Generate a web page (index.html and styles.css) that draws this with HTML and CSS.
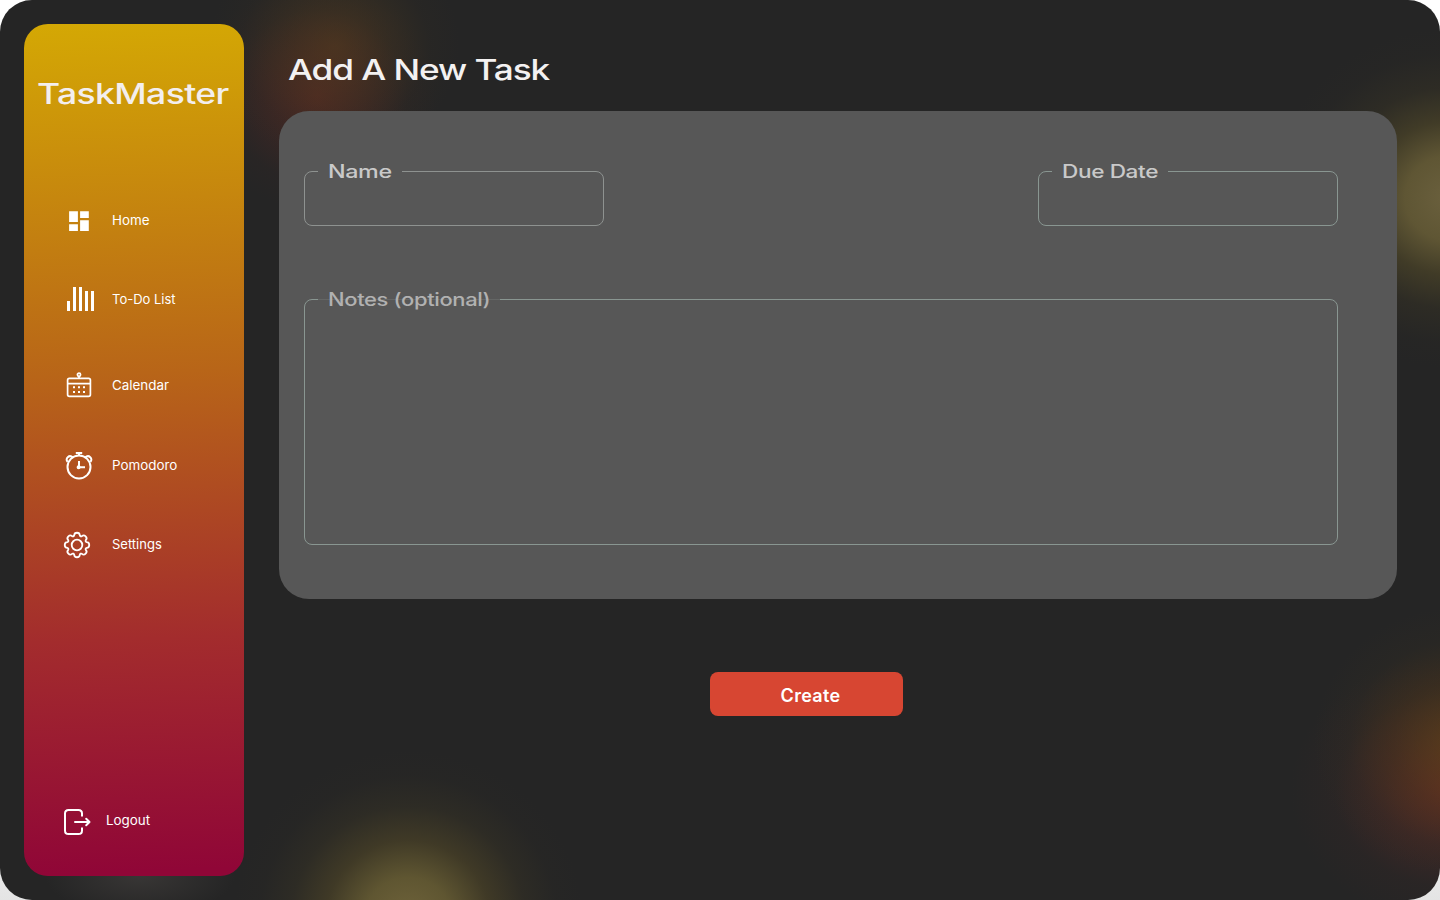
FILE: index.html
```html
<!DOCTYPE html>
<html lang="en">
<head>
<meta charset="utf-8">
<title>TaskMaster</title>
<link rel="stylesheet" href="styles.css">
</head>
<body>
<div class="app">
  <aside class="sidebar">
    <div class="brand"><span class="text brand-text">TaskMaster</span></div>
    <nav class="nav">
      <a class="nav-item home">
        <svg class="icon" viewBox="0 0 32 32"><path fill="#fff" d="M7.1 6.2h8.8v10.9H7.1zM18.1 6.2h8.7v6.7h-8.7zM7.1 19.3h8.8v6.8H7.1zM18.1 15.2h8.7v10.9h-8.7z"/></svg>
        <span class="text t-home">Home</span>
      </a>
      <a class="nav-item todo">
        <svg class="icon" viewBox="0 0 32 32"><path fill="#fff" d="M5 18h3v10H5zM11 4h3v24h-3zM17 4h3v24h-3zM23 8h3v20h-3zM29 8h3v20h-3z"/></svg>
        <span class="text t-todo">To-Do List</span>
      </a>
      <a class="nav-item calendar">
        <svg class="icon" viewBox="0 0 32 32" fill="none" stroke="#fff" stroke-width="1.7"><rect x="5.6" y="9.3" width="22.8" height="18" rx="1.8"/><path d="M5.6 14.6h22.8M17 7.5v2"/><circle cx="17" cy="5.8" r="1.6"/><path stroke-width="2" d="M11 18.3h2m3 0h2m3 0h2M11 23h2m3 0h2m3 0h2"/></svg>
        <span class="text t-calendar">Calendar</span>
      </a>
      <a class="nav-item pomodoro">
        <svg class="icon" viewBox="0 0 32 32" fill="none" stroke="#fff" stroke-width="2"><circle cx="17" cy="18" r="11.5"/><path d="M17 4.500v2.200M13.800 4h6.400M17 12v7M16 18.200h7M5.600 12.800C2.600 9.500 7.200 5.100 11 8.500M28.400 12.800C31.400 9.500 26.800 5.100 23 8.500"/><circle cx="16.6" cy="18.2" r="1" fill="#fff"/></svg>
        <span class="text t-pomodoro">Pomodoro</span>
      </a>
      <a class="nav-item settings">
        <svg class="icon" viewBox="0 0 32 32" fill="none" stroke="#fff" stroke-width="1.8" stroke-linejoin="round"><circle cx="15" cy="17" r="5.3"/><path d="M12.2 7.300C12.400 3.900 17.600 3.900 17.800 7.300C18 8.300 19 8.700 19.900 8.200C22.400 5.900 26.100 9.600 23.800 12.100C23.300 13 23.700 14 24.700 14.200C28.100 14.400 28.100 19.600 24.700 19.800C23.700 20 23.300 21 23.800 21.900C26.100 24.400 22.400 28.100 19.900 25.800C19 25.300 18 25.700 17.800 26.700C17.600 30.100 12.400 30.100 12.200 26.700C12 25.700 11 25.300 10.100 25.800C7.600 28.100 3.900 24.400 6.200 21.900C6.700 21 6.300 20 5.300 19.800C1.900 19.600 1.900 14.400 5.300 14.200C6.300 14 6.700 13 6.200 12.100C3.900 9.600 7.600 5.900 10.100 8.200C11 8.700 12 8.300 12.200 7.300Z"/></svg>
        <span class="text t-settings">Settings</span>
      </a>
    </nav>
    <a class="nav-item logout">
      <svg class="icon" viewBox="0 0 32 32" fill="none" stroke="#fff" stroke-width="2" stroke-linecap="round" stroke-linejoin="round"><path d="M20 9.800V7.600Q20 4 16.400 4H6.600Q3 4 3 7.600V24.400Q3 28 6.600 28H16.400Q20 28 20 24.400V22.200M13 16h14.500M24.200 12.700L27.500 16L24.200 19.300"/></svg>
      <span class="text t-logout">Logout</span>
    </a>
  </aside>
  <main class="main">
    <h1 class="title"><span class="text title-text">Add A New Task</span></h1>
    <form class="card">
      <div class="row">
        <fieldset class="field name"><legend><span class="text t-name">Name</span></legend></fieldset>
        <fieldset class="field due"><legend><span class="text t-due">Due Date</span></legend></fieldset>
      </div>
      <fieldset class="field notes"><legend><span class="text t-notes">Notes (optional)</span></legend></fieldset>
    </form>
    <button class="create" type="button">Create</button>
  </main>
</div>
</body>
</html>
```
FILE: styles.css
```css
* { box-sizing: border-box; }
body {
  margin: 0;
  background: linear-gradient(#fff 85%, #e4e4e4);
  font-family: Inter, "Liberation Sans", sans-serif;
}
.app {
  display: flex;
  width: 1440px;
  height: 900px;
  padding: 24px;
  overflow: hidden;
  border-radius: 32px;
  background:
    radial-gradient(180px 170px at 1450px 198px, rgba(130,116,70,.75), rgba(126,112,60,.65) 25%, rgba(100,88,42,.44) 45%, rgba(80,70,36,.2) 65%, rgba(60,54,34,.06) 85%, transparent),
    radial-gradient(175px 170px at 408px 920px, rgba(136,120,66,.75), rgba(126,112,56,.65) 25%, rgba(100,86,40,.42) 47%, rgba(80,70,36,.2) 67%, rgba(60,54,34,.06) 85%, transparent),
    radial-gradient(145px 135px at 1458px 742px, rgba(105,72,22,.6), rgba(90,60,22,.32) 45%, rgba(70,55,28,.1) 75%, transparent),
    radial-gradient(160px 135px at 1450px 790px, rgba(112,45,38,.7), rgba(90,42,38,.4) 42%, rgba(70,40,38,.14) 72%, transparent),
    radial-gradient(125px 115px at 335px 46px, rgba(95,65,28,.5), rgba(85,62,28,.26) 45%, rgba(70,55,28,.08) 75%, transparent),
    radial-gradient(120px 115px at 317px 96px, rgba(106,42,34,.55), rgba(90,40,35,.32) 45%, rgba(70,38,35,.1) 75%, transparent),
    radial-gradient(95px 40px at 140px 876px, #383635, rgba(56,54,53,0)),
    #252525;
}
.text { display: inline-block; white-space: nowrap; transform-origin: 0 50%; }
.sidebar {
  display: flex;
  flex-direction: column;
  flex: none;
  width: 220px;
  height: 852px;
  border-radius: 24px;
  background: linear-gradient(178deg, #d4a804, #b86518 41%, #a32c2d 72%, #900637 99%);
}
.brand { height: 138px; padding: 52px 0 0 13px; color: #f3eeee; font-size: 28px; font-weight: 500; line-height: 36px; }
.brand-text { letter-spacing: -.5px; transform: scaleX(1.27); }
.nav { display: grid; grid-template-rows: 79px 83px 83px 79px 79px; align-items: start; padding-top: 42px; }
.nav-item { display: flex; align-items: center; gap: 18px; height: 32px; padding-left: 38px; color: #fff; font-size: 13px; }
.t-home, .t-calendar, .t-pomodoro, .t-logout { transform: scaleX(1.03); }
.icon { width: 32px; height: 32px; flex: none; }
.home .icon { margin-top: 1px; }
.calendar { margin-top: 3px; }
.logout { gap: 12px; margin-top: auto; margin-bottom: 38px; }
.logout .text { margin-top: -4px; }
.main { flex: none; width: 1118px; margin-left: 35px; }
.title { height: 87px; margin: 0; padding: 28px 0 0 9px; color: #f3f1f1; font-size: 29px; line-height: 36px; font-weight: 500; }
.title-text { letter-spacing: -.9px; transform: scaleX(1.215); }
.card { height: 488px; padding: 48px 59px 0 25px; border-radius: 30px; background: #575757; }
.row { display: flex; justify-content: space-between; }
.field { min-width: 0; margin: 0; padding: 0 0 0 13px; border: 1px solid #899691; border-radius: 8px; }
.field legend { height: 24px; padding: 1px 0 0 10px; color: #c9c9c9; font-size: 18px; line-height: 24px; font-weight: 500; }
.name { width: 300px; height: 67px; border-color: #8e9290; }
.due { width: 300px; height: 67px; }
.name legend { width: 84px; }
.due legend { width: 116px; }
.notes { height: 258px; margin-top: 61px; }
.notes legend { width: 182px; color: #b1b1b1; background: linear-gradient(#646665, #646665) 0 12px / 100% 1px no-repeat; }
.field .text { letter-spacing: -.3px; }
.t-name { transform: scaleX(1.295); }
.t-due { transform: scaleX(1.255); }
.t-notes { transform: scaleX(1.22); }
.create { display: block; width: 193px; height: 44px; margin: 73px 0 0 431px; padding: 3px 0 0 8px; border: 0; border-radius: 8px; background: #d74632; color: #fff; font: 600 18px Inter, sans-serif; letter-spacing: .3px; }
```
